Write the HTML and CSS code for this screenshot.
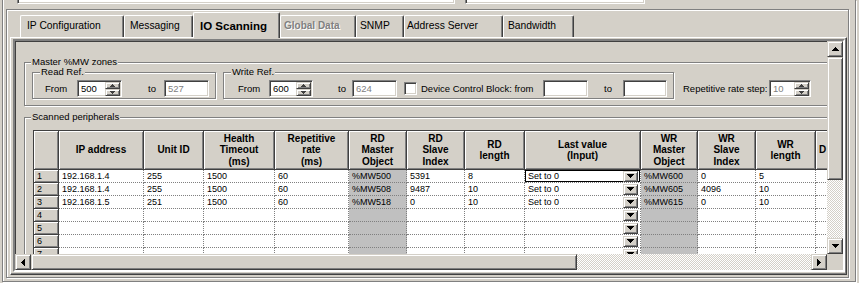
FILE: index.html
```html
<!DOCTYPE html>
<html>
<head>
  <meta charset="utf-8">
  <title>IO Scanning</title>
  <link rel="stylesheet" href="styles.css">
</head>
<body>
  <div class="outer">
    <div class="prev-fields">
      <div class="prev-box box-a"></div>
      <div class="prev-box box-b"></div>
    </div>
    <div class="frame">
      <div class="tabs">
        <div class="tab t-ip">IP Configuration</div>
        <div class="tab t-msg">Messaging</div>
        <div class="tab t-io active">IO Scanning</div>
        <div class="tab t-gd disabled">Global Data</div>
        <div class="tab t-snmp">SNMP</div>
        <div class="tab t-addr">Address Server</div>
        <div class="tab t-bw">Bandwidth</div>
      </div>
      <div class="panel">
        <div class="scrollview">
          <div class="viewport">
            <div class="content">

              <div class="group master">
                <div class="group-title">Master %MW zones</div>
                <div class="zones">
                  <div class="group sub read">
                    <div class="group-title">Read Ref.</div>
                    <div class="grow">
                      <span class="lbl from-r">From</span>
                      <div class="edit w45"><span class="val">500</span>
                        <div class="spin">
                          <i class="sp"><svg width="5" height="3"><path d="M2 0h1v1h1v1h1v1H0V2h1V1h1z"/></svg></i>
                          <i class="sp"><svg width="5" height="3"><path d="M0 0h5v1H4v1H3v1H2V2H1V1H0z"/></svg></i>
                        </div>
                      </div>
                      <span class="lbl to-r">to</span>
                      <div class="edit w45 off"><span class="val">527</span></div>
                    </div>
                  </div>

                  <div class="group sub write">
                    <div class="group-title">Write Ref.</div>
                    <div class="grow">
                      <span class="lbl from-w">From</span>
                      <div class="edit w44"><span class="val">600</span>
                        <div class="spin">
                          <i class="sp"><svg width="5" height="3"><path d="M2 0h1v1h1v1h1v1H0V2h1V1h1z"/></svg></i>
                          <i class="sp"><svg width="5" height="3"><path d="M0 0h5v1H4v1H3v1H2V2H1V1H0z"/></svg></i>
                        </div>
                      </div>
                      <span class="lbl to-w">to</span>
                      <div class="edit w45 off"><span class="val">624</span></div>
                      <span class="chk"></span>
                      <span class="lbl dcb">Device Control Block: from</span>
                      <div class="edit w45"><span class="val"></span></div>
                      <span class="lbl to-d">to</span>
                      <div class="edit w44"><span class="val"></span></div>
                    </div>
                  </div>

                  <div class="rate">
                    <span class="lbl rate-lbl">Repetitive rate step:</span>
                    <div class="edit w42 off"><span class="val">10</span>
                      <div class="spin">
                        <i class="sp"><svg width="5" height="3"><path d="M2 0h1v1h1v1h1v1H0V2h1V1h1z"/></svg></i>
                        <i class="sp"><svg width="5" height="3"><path d="M0 0h5v1H4v1H3v1H2V2H1V1H0z"/></svg></i>
                      </div>
                    </div>
                  </div>
                </div>
              </div>

              <div class="group scanned">
                <div class="group-title">Scanned peripherals</div>
                <div class="grid">
                  <div class="hd"></div>
                  <div class="hd">IP address</div>
                  <div class="hd">Unit ID</div>
                  <div class="hd">Health<br>Timeout<br>(ms)</div>
                  <div class="hd">Repetitive<br>rate<br>(ms)</div>
                  <div class="hd">RD<br>Master<br>Object</div>
                  <div class="hd">RD<br>Slave<br>Index</div>
                  <div class="hd">RD<br>length</div>
                  <div class="hd">Last value<br>(Input)</div>
                  <div class="hd">WR<br>Master<br>Object</div>
                  <div class="hd">WR<br>Slave<br>Index</div>
                  <div class="hd">WR<br>length</div>
                  <div class="hd hd-left">D</div>

                  <div class="rh">1</div>
                  <div class="c">192.168.1.4</div>
                  <div class="c">255</div>
                  <div class="c">1500</div>
                  <div class="c">60</div>
                  <div class="c g">%MW500</div>
                  <div class="c">5391</div>
                  <div class="c">8</div>
                  <div class="c cb focus"><span>Set to 0</span><i class="dd"><svg width="7" height="4"><path d="M0 0h7v1H6v1H5v1H4v1H3V3H2V2H1V1H0z"/></svg></i></div>
                  <div class="c g">%MW600</div>
                  <div class="c">0</div>
                  <div class="c">5</div>
                  <div class="c"></div>

                  <div class="rh">2</div>
                  <div class="c">192.168.1.4</div>
                  <div class="c">255</div>
                  <div class="c">1500</div>
                  <div class="c">60</div>
                  <div class="c g">%MW508</div>
                  <div class="c">9487</div>
                  <div class="c">10</div>
                  <div class="c cb"><span>Set to 0</span><i class="dd"><svg width="7" height="4"><path d="M0 0h7v1H6v1H5v1H4v1H3V3H2V2H1V1H0z"/></svg></i></div>
                  <div class="c g">%MW605</div>
                  <div class="c">4096</div>
                  <div class="c">10</div>
                  <div class="c"></div>

                  <div class="rh">3</div>
                  <div class="c">192.168.1.5</div>
                  <div class="c">251</div>
                  <div class="c">1500</div>
                  <div class="c">60</div>
                  <div class="c g">%MW518</div>
                  <div class="c">0</div>
                  <div class="c">10</div>
                  <div class="c cb"><span>Set to 0</span><i class="dd"><svg width="7" height="4"><path d="M0 0h7v1H6v1H5v1H4v1H3V3H2V2H1V1H0z"/></svg></i></div>
                  <div class="c g">%MW615</div>
                  <div class="c">0</div>
                  <div class="c">10</div>
                  <div class="c"></div>

                  <div class="rh">4</div>
                  <div class="c"></div><div class="c"></div><div class="c"></div><div class="c"></div>
                  <div class="c g"></div><div class="c"></div><div class="c"></div>
                  <div class="c cb"><span></span><i class="dd"><svg width="7" height="4"><path d="M0 0h7v1H6v1H5v1H4v1H3V3H2V2H1V1H0z"/></svg></i></div>
                  <div class="c g"></div><div class="c"></div><div class="c"></div><div class="c"></div>

                  <div class="rh">5</div>
                  <div class="c"></div><div class="c"></div><div class="c"></div><div class="c"></div>
                  <div class="c g"></div><div class="c"></div><div class="c"></div>
                  <div class="c cb"><span></span><i class="dd"><svg width="7" height="4"><path d="M0 0h7v1H6v1H5v1H4v1H3V3H2V2H1V1H0z"/></svg></i></div>
                  <div class="c g"></div><div class="c"></div><div class="c"></div><div class="c"></div>

                  <div class="rh">6</div>
                  <div class="c"></div><div class="c"></div><div class="c"></div><div class="c"></div>
                  <div class="c g"></div><div class="c"></div><div class="c"></div>
                  <div class="c cb"><span></span><i class="dd"><svg width="7" height="4"><path d="M0 0h7v1H6v1H5v1H4v1H3V3H2V2H1V1H0z"/></svg></i></div>
                  <div class="c g"></div><div class="c"></div><div class="c"></div><div class="c"></div>

                  <div class="rh">7</div>
                  <div class="c"></div><div class="c"></div><div class="c"></div><div class="c"></div>
                  <div class="c g"></div><div class="c"></div><div class="c"></div>
                  <div class="c cb"><span></span><i class="dd"><svg width="7" height="4"><path d="M0 0h7v1H6v1H5v1H4v1H3V3H2V2H1V1H0z"/></svg></i></div>
                  <div class="c g"></div><div class="c"></div><div class="c"></div><div class="c"></div>
                </div>
              </div>

            </div>
          </div>

          <div class="vscroll">
            <i class="sbtn"><svg width="7" height="4"><path d="M3 0h1v1h1v1h1v1h1v1H0V3h1V2h1V1h1z"/></svg></i>
            <i class="thumb v-thumb"></i>
            <i class="track"></i>
            <i class="sbtn"><svg width="7" height="4"><path d="M0 0h7v1H6v1H5v1H4v1H3V3H2V2H1V1H0z"/></svg></i>
          </div>
          <div class="hscroll">
            <i class="sbtn"><svg width="4" height="7"><path d="M4 0v7H3V6H2V5H1V4H0V3H1V2H2V1H3V0z"/></svg></i>
            <i class="thumb h-thumb"></i>
            <i class="track"></i>
            <i class="sbtn"><svg width="4" height="7"><path d="M0 0h1v1h1v1h1v1h1v1H3v1H2v1H1v1H0z"/></svg></i>
          </div>
          <div class="corner"></div>
        </div>
      </div>
    </div>
  </div>
</body>
</html>
```

FILE: styles.css
```css
* {
  box-sizing: border-box;
}
html, body {
  margin: 0;
  padding: 0;
}
body {
  width: 859px;
  height: 283px;
  overflow: hidden;
  background: #d4d0c8;
  color: #000;
  font-family: "Liberation Sans", Arial, sans-serif;
  font-size: 9.5px;
}
i {
  font-style: normal;
}
svg {
  display: block;
}

/* outer window frames */
.outer {
  margin-left: 2px;
  width: 854px;
  height: 282px;
  border: 1px solid #808080;
  border-top: none;
  box-shadow: inset 1px 0 #fff, 1px 1px #fff;
}
.prev-fields {
  display: flex;
  height: 4px;
}
.prev-box {
  height: 4px;
  background: #fff;
  border-left: 1px solid #808080;
  border-right: 1px solid #fff;
  border-bottom: 1px solid #fff;
  box-shadow: inset 1px 0 #404040, inset -1px -1px #d4d0c8;
}
.box-a {
  margin-left: 14px;
  width: 438px;
}
.box-b {
  margin-left: 10px;
  width: 180px;
}
.frame {
  margin: 5px 0 0 3px;
  width: 843px;
  height: 269px;
  border: 1px solid #808080;
  box-shadow: inset 1px 1px #fff, 1px 1px #fff;
}

/* tabs */
.tabs {
  display: flex;
  align-items: flex-end;
  height: 25px;
  margin: 2px 0 0 13px;
}
.tab {
  height: 22px;
  border: 1px solid #fff;
  border-right-color: #404040;
  border-bottom: none;
  border-radius: 2px 2px 0 0;
  box-shadow: inset -1px 0 #808080;
  font-size: 10.3px;
  line-height: 20px;
  white-space: nowrap;
  overflow: hidden;
}
.tab.active {
  position: relative;
  z-index: 1;
  height: 26px;
  margin-bottom: -1px;
  padding-top: 3px;
  background: #d4d0c8;
  font-weight: bold;
  font-size: 11.5px;
}
.tab.disabled {
  color: #808080;
  text-shadow: 1px 1px 0 #fff;
  font-weight: bold;
  font-size: 10px;
}
.t-ip { width: 104px; padding-left: 6px; }
.t-msg { width: 69px; padding-left: 5px; }
.t-io { width: 87px; padding-left: 6px; }
.t-gd { width: 76px; padding-left: 3px; }
.t-snmp { width: 48px; padding-left: 3px; }
.t-addr { width: 99px; padding-left: 2px; }
.t-bw { width: 71px; padding-left: 4px; }

.panel {
  margin-left: 3px;
  width: 837px;
  height: 238px;
  padding: 1px 0 1px 2px;
  border: 1px solid #fff;
  border-right-color: #404040;
  border-bottom-color: #404040;
  box-shadow: inset -1px -1px #808080;
}
.scrollview {
  display: grid;
  grid-template-columns: 812px 16px;
  grid-template-rows: 213px 16px;
  width: 832px;
  height: 233px;
  border: 2px solid;
  border-color: #808080 #fff #fff #808080;
  box-shadow: inset 1px 1px #404040;
}

/* scrolled content */
.viewport {
  overflow: hidden;
}
.content {
  width: 1160px;
  padding: 21px 0 0 9px;
}
.group {
  border: 1px solid #808080;
  box-shadow: inset 1px 1px #fff, 1px 1px #fff;
}
.group-title {
  width: fit-content;
  margin: -7px 0 0 6px;
  padding: 0 1px;
  background: #d4d0c8;
  line-height: 12px;
  white-space: nowrap;
}
.sub .group-title {
  margin-left: 7px;
}
.master {
  width: 1130px;
  padding-bottom: 6px;
}
.zones {
  display: flex;
  align-items: flex-start;
  margin: 4px 0 0 7px;
}
.sub {
  padding-bottom: 1px;
}
.read {
  width: 184px;
}
.write {
  width: 451px;
  margin-left: 7px;
}
.grow {
  display: flex;
  align-items: center;
  height: 17px;
  margin-top: 2px;
}
.read .grow {
  padding-left: 12px;
}
.write .grow {
  padding-left: 14px;
}
.lbl {
  white-space: nowrap;
  flex: none;
}
.from-r { width: 32px; }
.to-r { width: 16px; margin-left: 26px; }
.from-w { width: 31px; }
.to-w { width: 14px; margin-left: 25px; }
.dcb { width: 122px; margin-left: 4px; }
.to-d { width: 19px; margin-left: 16px; }
.rate {
  display: flex;
  align-items: center;
  height: 17px;
  margin: 8px 0 0 9px;
}
.rate-lbl { width: 86px; }

.edit {
  display: flex;
  align-items: center;
  flex: none;
  height: 17px;
  padding-left: 3px;
  background: #fff;
  border: 1px solid;
  border-color: #808080 #fff #fff #808080;
  box-shadow: inset 1px 1px #404040, inset -1px -1px #d4d0c8;
}
.edit .val {
  flex: 1;
  line-height: 13px;
}
.edit.off .val {
  color: #808080;
}
.w42 { width: 42px; }
.w44 { width: 44px; }
.w45 { width: 45px; }
.spin {
  display: flex;
  flex-direction: column;
  width: 15px;
  height: 14px;
  margin-right: 1px;
}
.sp, .sbtn, .dd {
  display: flex;
  align-items: center;
  justify-content: center;
  background: #d4d0c8;
  border: 1px solid;
  border-color: #d4d0c8 #404040 #404040 #d4d0c8;
  box-shadow: inset 1px 1px #fff, inset -1px -1px #808080;
}
.sp {
  height: 7px;
}
.sp svg {
  fill: #404040;
}
.chk {
  flex: none;
  width: 13px;
  height: 13px;
  margin-left: 7px;
  background: #fff;
  border: 1px solid;
  border-color: #808080 #fff #fff #808080;
  box-shadow: inset 1px 1px #404040, inset -1px -1px #d4d0c8;
}

/* scanned peripherals grid */
.scanned {
  width: 1130px;
  height: 200px;
  margin-top: 11px;
}
.grid {
  display: grid;
  grid-template-columns: 25px 85px 60px 71px 74px 58px 58px 60px 116px 57px 58px 60px 60px;
  grid-template-rows: 39px repeat(7, 13px);
  width: max-content;
  margin: 7px 0 0 8px;
  border-top: 1px solid #404040;
  border-left: 1px solid #404040;
  background: #fff;
}
.hd, .rh {
  background: #d4d0c8;
  border-right: 1px solid #404040;
  border-bottom: 1px solid #404040;
  box-shadow: inset 1px 1px #fff, inset -1px -1px #808080;
}
.hd {
  display: flex;
  align-items: center;
  justify-content: center;
  text-align: center;
  font-weight: bold;
  font-size: 10px;
  line-height: 11.5px;
}
.hd-left {
  justify-content: flex-start;
  padding-left: 3px;
}
.rh, .c {
  font-size: 9px;
  line-height: 12px;
  padding-left: 3px;
  white-space: nowrap;
  overflow: hidden;
}
.c {
  border-right: 1px dotted #808080;
  border-bottom: 1px dotted #808080;
}
.c.g {
  background: #c0c0c0;
}
.cb {
  display: flex;
  align-items: center;
  padding-right: 2px;
}
.cb span {
  flex: 1;
}
.cb.focus {
  box-shadow: inset 0 0 0 1px #000;
}
.dd {
  width: 15px;
  height: 11px;
}

/* scroll bars */
.vscroll, .hscroll {
  display: flex;
  background: repeating-conic-gradient(#fff 0 25%, #d4d0c8 0 50%) 0 0 / 2px 2px;
}
.vscroll {
  flex-direction: column;
}
.sbtn {
  width: 16px;
  height: 16px;
  flex: none;
}
.thumb {
  background: #d4d0c8;
  border: 1px solid;
  border-color: #d4d0c8 #404040 #404040 #d4d0c8;
  box-shadow: inset 1px 1px #fff, inset -1px -1px #808080;
  flex: none;
}
.v-thumb {
  height: 123px;
}
.h-thumb {
  width: 546px;
}
.track {
  flex: 1;
}
.corner {
  background: #d4d0c8;
}
```
